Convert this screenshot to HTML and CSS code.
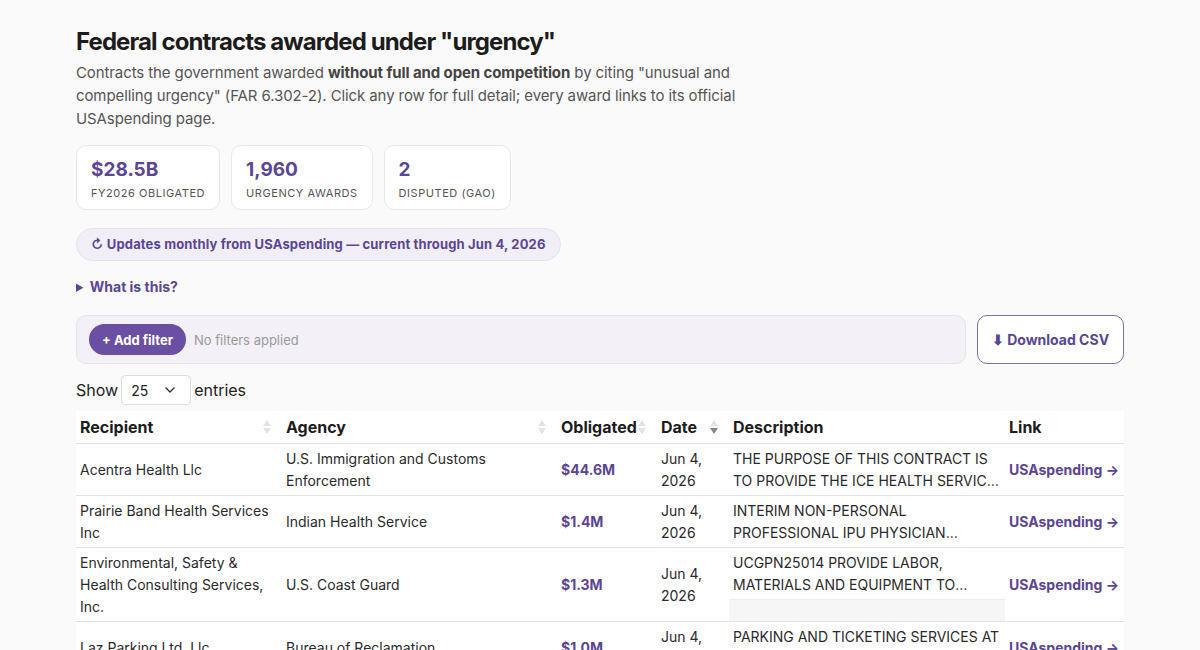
FILE: index.html
```html
<!DOCTYPE html>
<html lang="en">
<head>
<meta charset="utf-8">
<title>Federal contracts awarded under "urgency"</title>
<link rel="stylesheet" href="styles.css">
</head>
<body>
<main class="page">
  <h1 class="title">Federal contracts awarded under "urgency"</h1>
  <p class="intro">Contracts the government awarded <strong>without full and open competition</strong> by citing "unusual and compelling urgency" (FAR 6.302-2). Click any row for full detail; every award links to its official USAspending page.</p>

  <div class="stats">
    <div class="stat"><div class="stat-value">$28.5B</div><div class="stat-label">FY2026 obligated</div></div>
    <div class="stat"><div class="stat-value">1,960</div><div class="stat-label">Urgency awards</div></div>
    <div class="stat"><div class="stat-value">2</div><div class="stat-label">Disputed (GAO)</div></div>
  </div>

  <div class="pill">↻ Updates monthly from USAspending — current through Jun 4, 2026</div>

  <details class="about"><summary>What is this?</summary></details>

  <div class="toolbar">
    <div class="filterbar">
      <button class="add-filter">+ Add filter</button>
      <span class="no-filters">No filters applied</span>
    </div>
    <button class="download">⬇ Download CSV</button>
  </div>

  <div class="length">
    <span>Show</span>
    <div class="select"><span>25</span><svg width="12" height="8" viewBox="0 0 12 8"><path d="M2 2l4 4 4-4" fill="none" stroke="#333" stroke-width="1.4" stroke-linecap="round" stroke-linejoin="round"/></svg></div>
    <span>entries</span>
  </div>

  <table class="grid">
    <colgroup>
      <col class="c-rec"><col class="c-ag"><col class="c-ob"><col class="c-date"><col class="c-desc"><col class="c-link">
    </colgroup>
    <thead>
      <tr>
        <th class="sortable">Recipient<span class="sort"><i class="up"></i><i class="down"></i></span></th>
        <th class="sortable">Agency<span class="sort"><i class="up"></i><i class="down"></i></span></th>
        <th class="sortable">Obligated<span class="sort"><i class="up"></i><i class="down"></i></span></th>
        <th class="sortable">Date<span class="sort active"><i class="up"></i><i class="down"></i></span></th>
        <th>Description</th>
        <th>Link</th>
      </tr>
    </thead>
    <tbody>
      <tr>
        <td>Acentra Health Llc</td>
        <td>U.S. Immigration and Customs Enforcement</td>
        <td class="amt">$44.6M</td>
        <td>Jun 4, 2026</td>
        <td class="desc"><div class="clamp">THE PURPOSE OF THIS CONTRACT IS TO PROVIDE THE ICE HEALTH SERVICE CORPS WITH MEDICAL STAFFING</div></td>
        <td><a class="link" href="#">USAspending →</a></td>
      </tr>
      <tr>
        <td>Prairie Band Health Services Inc</td>
        <td>Indian Health Service</td>
        <td class="amt">$1.4M</td>
        <td>Jun 4, 2026</td>
        <td class="desc"><div class="clamp">INTERIM NON-PERSONAL PROFESSIONAL IPU PHYSICIAN SERVICES</div></td>
        <td><a class="link" href="#">USAspending →</a></td>
      </tr>
      <tr>
        <td>Environmental, Safety &amp; Health Consulting Services, Inc.</td>
        <td>U.S. Coast Guard</td>
        <td class="amt">$1.3M</td>
        <td>Jun 4, 2026</td>
        <td class="desc"><div class="clamp">UCGPN25014 PROVIDE LABOR, MATERIALS AND EQUIPMENT TO PERFORM</div></td>
        <td><a class="link" href="#">USAspending →</a></td>
      </tr>
      <tr>
        <td>Laz Parking Ltd. Llc</td>
        <td>Bureau of Reclamation</td>
        <td class="amt">$1.0M</td>
        <td>Jun 4, 2026</td>
        <td class="desc"><div class="clamp">PARKING AND TICKETING SERVICES AT HOOVER DAM</div></td>
        <td><a class="link" href="#">USAspending →</a></td>
      </tr>
    </tbody>
  </table>
</main>
</body>
</html>
```

FILE: styles.css
```css
* { box-sizing: border-box; }
html, body { margin: 0; padding: 0; }
body {
  background: #fafafa;
  font-family: Inter, "Noto Sans", sans-serif;
  color: #222;
}
.page {
  width: 1048px;
  margin: 0 auto;
  padding-top: 27px;
}
.title {
  font-size: 24px;
  font-weight: 700;
  letter-spacing: -0.9px;
  margin: 0 0 4px;
  line-height: 30px;
  color: #1c1c1c;
}
.intro {
  font-size: 15px;
  line-height: 23px;
  color: #555;
  margin: 0 0 15px;
  max-width: 680px;
  letter-spacing: -0.1px;
}
.intro strong { color: #444; }

.stats { display: flex; gap: 11px; margin-bottom: 18px; }
.stat {
  background: #fff;
  border: 1px solid #e8e8e8;
  border-radius: 10px;
  padding: 12px 14px 9px;
  height: 65px;
}
.stat-value { font-size: 19px; font-weight: 700; color: #5b4596; line-height: 24px; }
.stat-label {
  font-size: 11px; text-transform: uppercase; letter-spacing: 0.55px;
  color: #555; margin-top: 3px; line-height: 16px;
}

.pill {
  display: inline-block;
  background: #f1eef7;
  border: 1px solid #e6e1ef;
  border-radius: 17px;
  padding: 0 14px;
  height: 33px;
  line-height: 31px;
  font-size: 13px;
  font-weight: 700;
  letter-spacing: 0.15px;
  color: #5b4596;
}

.about { margin: 17px 0 19px; }
.about summary {
  font-size: 14px; font-weight: 700; color: #5b4596;
  cursor: pointer; line-height: 18px;
}
.about summary::marker { font-size: 13px; }

.toolbar { display: flex; gap: 11px; align-items: stretch; }
.filterbar {
  flex: 1;
  display: flex; align-items: center; gap: 8px;
  background: #f3f1f7;
  border: 1px solid #e6e2ee;
  border-radius: 10px;
  height: 49px;
  padding: 0 12px;
}
.add-filter {
  font-family: inherit;
  background: #6a4fa2; color: #fff;
  border: 0; border-radius: 16px;
  height: 31px; padding: 0 13px;
  font-size: 13px; font-weight: 700;
}
.no-filters { font-size: 13px; color: #999; }
.download {
  font-family: inherit;
  background: #fff;
  border: 1px solid #7d70a8;
  border-radius: 10px;
  width: 147px; height: 49px;
  font-size: 14px; font-weight: 700; color: #5b4596;
}

.length {
  display: flex; align-items: center; gap: 3px;
  margin: 11px 0 6px;
  font-size: 16px; color: #222;
}
.select {
  display: flex; align-items: center; justify-content: space-between;
  width: 70px; height: 30px;
  background: #fff;
  border: 1px solid #ddd; border-radius: 4px;
  padding: 0 14px 0 9px;
  font-size: 14px;
}

.grid {
  width: 100%;
  border-collapse: collapse;
  table-layout: fixed;
  background: #fff;
  font-size: 14px;
}
.c-rec { width: 206px; }
.c-ag { width: 275px; }
.c-ob { width: 100px; }
.c-date { width: 72px; }
.c-desc { width: 276px; }
.c-link { width: 119px; }
.grid th {
  text-align: left;
  font-size: 16px; font-weight: 700; color: #1c1c1c;
  padding: 4px 4px 4px;
  line-height: 24px;
  border-bottom: 1px solid #e3e3e3;
  position: relative;
}
.sort {
  position: absolute; right: 11px; top: 50%;
  transform: translateY(-50%);
  display: flex; flex-direction: column; gap: 2px;
}
.sort i {
  display: block; width: 0; height: 0;
  border-left: 4px solid transparent; border-right: 4px solid transparent;
}
.sort .up { border-bottom: 6px solid #e3e3e3; }
.sort .down { border-top: 6px solid #e3e3e3; }
.sort.active .down { border-top-color: #888; }

.grid td {
  padding: 4px 4px 3px;
  line-height: 22px;
  color: #2a2a2a;
  vertical-align: middle;
  border-bottom: 1px solid #e3e3e3;
}
.grid td.amt { font-weight: 700; color: #5b4596; }
.grid td.desc {
  vertical-align: top;
  padding: 0;
  background: #f6f6f6;
}
.clamp {
  background: #fff;
  padding: 4px 4px 3px;
  display: -webkit-box;
  -webkit-line-clamp: 2;
  -webkit-box-orient: vertical;
  overflow: hidden;
  box-shadow: 0 1px 0 #ececec;
}
.link {
  font-weight: 700; color: #5b4596; text-decoration: none;
}
```
